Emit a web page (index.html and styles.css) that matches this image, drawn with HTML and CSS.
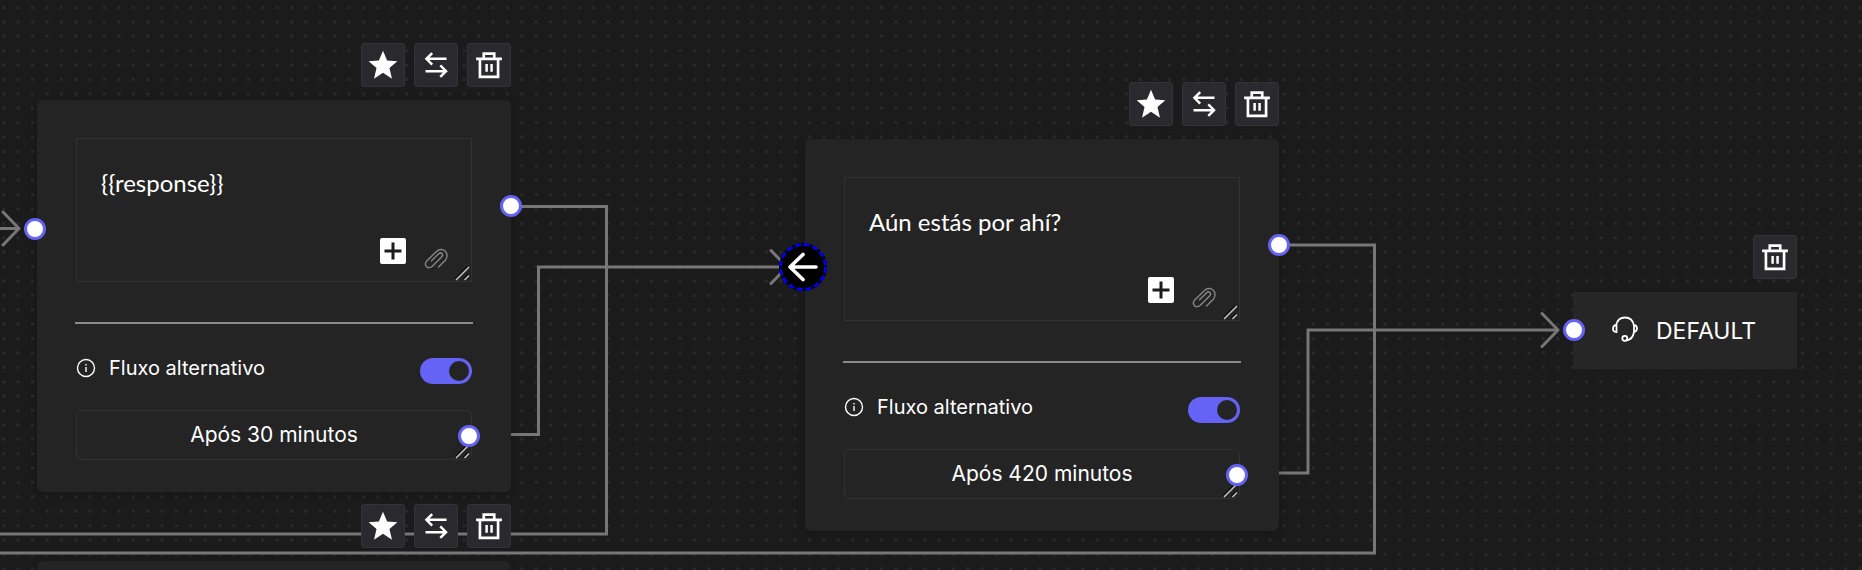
FILE: index.html
```html
<!DOCTYPE html>
<html lang="pt-BR">
<head>
<meta charset="utf-8">
<title>Editor de fluxo</title>
<link rel="stylesheet" href="styles.css">
</head>
<body>
<svg class="symbols" aria-hidden="true">
  <symbol id="star" viewBox="0 0 44 44"><path fill="currentColor" d="M22 7l4.300 10.200 10.700.8-8.200 7.100 2.600 11.400L22 30.200l-9.400 6.300 2.600-11.400L7 18l10.700-.8z"/></symbol>
  <symbol id="swap" viewBox="0 0 44 44"><path fill="none" stroke="currentColor" stroke-width="2.600" d="M33 15.500H12M18 9.500l-6 6 6 6M11 28.500h21.500M26.500 22.500l6 6-6 6"/></symbol>
  <symbol id="trash" viewBox="0 0 44 44"><path fill="none" stroke="currentColor" stroke-width="2.800" d="M8.500 15.500h27M12.500 15.500v19h19v-19M16.500 15v-5h11v5"/><path fill="none" stroke="currentColor" stroke-width="2.600" d="M19.500 21v8M24.700 21v8"/></symbol>
  <symbol id="plus" viewBox="0 0 26 26"><rect width="26" height="26" rx="2" fill="#fff"/><path stroke="#1b1b1b" stroke-width="3" d="M13 4.500v17M4.500 13h17"/></symbol>
  <symbol id="clip" viewBox="0 0 24 22"><path fill="none" stroke="currentColor" stroke-width="1.400" stroke-linecap="round" d="M14.500 20l6.800-6.800c2.300-2.500 2.200-7-.2-9.200-2.300-2.200-6-2-8.600.4l-9.300 9.100c-2 2-2.200 4.600-.7 6.200 1.500 1.500 4.100 1.300 6.100-.7l8.900-8.900c1.100-1.100 1.400-2.700.5-3.600-.9-.9-2.500-.6-3.600.5L7.500 13.800"/></symbol>
  <symbol id="info" viewBox="0 0 20 20"><circle cx="10" cy="10" r="8.500" fill="none" stroke="currentColor" stroke-width="1.400"/><path stroke="currentColor" stroke-width="1.400" d="M10 9v5M10 6v1.500"/></symbol>
  <symbol id="grip" viewBox="0 0 15 15"><path stroke="#0c0c0c" stroke-width="1.500" d="M0 13L12.500.5M8.500 13L13 8.500"/><path stroke="#c4c4c4" stroke-width="1.500" d="M1 14L14 1M9.500 14L14 9.500"/></symbol>
</svg>

<main class="canvas">
  <svg class="edges" width="100%" height="100%" aria-hidden="true">
    <defs>
      <pattern id="dots" x="2.200" y="-8.300" width="14.390" height="14.390" patternUnits="userSpaceOnUse"><rect width="3" height="3" fill="#292929"/></pattern>
    </defs>
    <rect width="100%" height="100%" fill="url(#dots)"/>
    <g class="wires">
      <path d="M0 228.500h20"/>
      <path d="M511 206.500h95.500V534H0"/>
      <path d="M511 434.500h27.500V267H787"/>
      <path d="M1279 245h95.500v308H0"/>
      <path d="M1279 473h29V330h250"/>
      <path class="tip" d="M3 212l16 16.500L3 245M771 250.500l16 16.500-16 16.500M1542 313.500l16 16.500-16 16.500"/>
    </g>
  </svg>

  <section class="node node-a">
    <div class="tools">
      <button class="tool" aria-label="Favorito"><svg><use href="#star"/></svg></button>
      <button class="tool" aria-label="Trocar"><svg><use href="#swap"/></svg></button>
      <button class="tool" aria-label="Excluir"><svg><use href="#trash"/></svg></button>
    </div>
    <div class="card">
      <div class="message">
        <textarea class="message-text" aria-label="Mensagem">{{response}}</textarea>
        <div class="message-actions">
          <button class="plain" aria-label="Adicionar variável"><svg class="icon-plus"><use href="#plus"/></svg></button>
          <button class="plain" aria-label="Anexar"><svg class="icon-clip"><use href="#clip"/></svg></button>
        </div>
        <svg class="grip" aria-hidden="true"><use href="#grip"/></svg>
      </div>
      <hr class="rule">
      <div class="option">
        <label class="option-label" for="alt-a"><svg class="icon-info"><use href="#info"/></svg>Fluxo alternativo</label>
        <input class="switch" id="alt-a" type="checkbox" role="switch" checked>
      </div>
      <div class="delay">
        <textarea class="delay-text" aria-label="Tempo de espera">Após 30 minutos</textarea>
        <svg class="grip" aria-hidden="true"><use href="#grip"/></svg>
        <span class="port port-delay"></span>
      </div>
      <span class="port port-in"></span>
      <span class="port port-out"></span>
    </div>
  </section>

  <section class="node node-b">
    <div class="tools">
      <button class="tool" aria-label="Favorito"><svg><use href="#star"/></svg></button>
      <button class="tool" aria-label="Trocar"><svg><use href="#swap"/></svg></button>
      <button class="tool" aria-label="Excluir"><svg><use href="#trash"/></svg></button>
    </div>
    <div class="card">
      <div class="message">
        <textarea class="message-text" aria-label="Mensagem">Aún estás por ahí?</textarea>
        <div class="message-actions">
          <button class="plain" aria-label="Adicionar variável"><svg class="icon-plus"><use href="#plus"/></svg></button>
          <button class="plain" aria-label="Anexar"><svg class="icon-clip"><use href="#clip"/></svg></button>
        </div>
        <svg class="grip" aria-hidden="true"><use href="#grip"/></svg>
      </div>
      <hr class="rule">
      <div class="option">
        <label class="option-label" for="alt-b"><svg class="icon-info"><use href="#info"/></svg>Fluxo alternativo</label>
        <input class="switch" id="alt-b" type="checkbox" role="switch" checked>
      </div>
      <div class="delay">
        <textarea class="delay-text" aria-label="Tempo de espera">Após 420 minutos</textarea>
        <svg class="grip" aria-hidden="true"><use href="#grip"/></svg>
        <span class="port port-delay"></span>
      </div>
      <button class="back" aria-label="Voltar"><svg viewBox="0 0 48 48"><circle cx="24" cy="24" r="24" fill="#000"/><circle cx="24" cy="24" r="22.500" fill="none" stroke="#0000f5" stroke-width="2.800" stroke-dasharray="6 2.836"/><path fill="none" stroke="#fff" stroke-width="3.600" stroke-linecap="round" stroke-linejoin="round" d="M37 24H11M24 11.500L11 24l13 12.500"/></svg></button>
      <span class="port port-out"></span>
    </div>
  </section>

  <section class="node node-c">
    <div class="tools">
      <button class="tool" aria-label="Favorito"><svg><use href="#star"/></svg></button>
      <button class="tool" aria-label="Trocar"><svg><use href="#swap"/></svg></button>
      <button class="tool" aria-label="Excluir"><svg><use href="#trash"/></svg></button>
    </div>
    <div class="card"></div>
  </section>

  <section class="node node-d">
    <div class="tools">
      <button class="tool" aria-label="Excluir"><svg><use href="#trash"/></svg></button>
    </div>
    <div class="queue">
      <svg class="icon-agent" viewBox="0 0 26 26" fill="none" stroke="#fff" stroke-width="1.800" aria-hidden="true"><path d="M4 9.500C5 4.500 8.500 1.500 13 1.500s8 3 9 8M4.500 9C2.500 9 1 10.500 1 12.500S2.500 16 4.500 16zM22 9c1.800.3 3 1.700 3 3.500s-1.200 3-3 3.500M22 9v7c-.7 4.500-3.500 8-8 8.500"/><circle cx="12.800" cy="22.300" r="2.500"/></svg>
      <span>DEFAULT</span>
      <span class="port port-queue"></span>
    </div>
  </section>
</main>
</body>
</html>
```

FILE: styles.css
```css
* {
  box-sizing: border-box;
}

body {
  margin: 0;
  color-scheme: dark;
  background: #1b1b1b;
  color: #fff;
  font-family: "Inter", "Liberation Sans", sans-serif;
}

button,
textarea {
  font-family: inherit;
  color: inherit;
}

.symbols {
  position: absolute;
  width: 0;
  height: 0;
}

.canvas {
  position: relative;
  height: 100vh;
  overflow: hidden;
}

.edges {
  position: absolute;
  inset: 0;
}

.wires path {
  fill: none;
  stroke: #777;
  stroke-width: 3px;
}

.wires .tip {
  stroke-linecap: round;
  stroke-linejoin: round;
}

/* Nodes on the free canvas */
.node {
  position: absolute;
  display: flex;
  flex-direction: column;
  gap: 13px;
  width: 474px;
}

.node-a {
  left: 37px;
  top: 43px;
}

.node-b {
  left: 805px;
  top: 82px;
}

.node-c {
  left: 37px;
  top: 504px;
}

.node-d {
  left: 1573px;
  top: 235px;
  width: 224px;
}

.tools {
  display: flex;
  justify-content: flex-end;
  gap: 9px;
}

.tool {
  display: flex;
  width: 44px;
  height: 44px;
  padding: 0;
  border: 1px solid #333338;
  border-radius: 3px;
  background: #2a292e;
}

.tool svg {
  width: 100%;
  height: 100%;
}

.card {
  position: relative;
  padding: 38px 39px 32px;
  border-radius: 6px;
  background: #242424;
  box-shadow: 0 3px 10px rgba(0, 0, 0, 0.2);
}

.message,
.delay {
  position: relative;
  display: flex;
}

.message-text,
.delay-text {
  width: 100%;
  border: 1px solid #323232;
  background: transparent;
  outline: none;
  overflow: hidden;
  resize: none;
}

.message-text {
  height: 144px;
  padding: 29px 24px;
  font-family: "Lato", "Inter", sans-serif;
  font-size: 24px;
  line-height: 30px;
}

.message-actions {
  position: absolute;
  right: 24px;
  bottom: 13px;
  display: flex;
  align-items: flex-end;
  gap: 18px;
}

.grip {
  position: absolute;
  right: 2px;
  bottom: 1px;
  width: 15px;
  height: 15px;
  pointer-events: none;
}

.plain {
  display: flex;
  padding: 0;
  border: 0;
  background: none;
}

.icon-plus {
  width: 26px;
  height: 26px;
  margin-bottom: 5px;
}

.icon-clip {
  width: 24px;
  height: 22px;
  color: #858585;
}

.rule {
  height: 2px;
  margin: 40px -1px 32px;
  border: 0;
  background: #8a8a8a;
}

.option {
  display: flex;
  align-items: center;
  justify-content: space-between;
  margin-bottom: 24px;
}

.option-label {
  display: flex;
  align-items: center;
  gap: 13px;
  padding-bottom: 6px;
  font-size: 20px;
  line-height: 24px;
}

.icon-info {
  width: 20px;
  height: 20px;
}

.switch {
  appearance: none;
  display: flex;
  justify-content: flex-end;
  width: 52px;
  height: 26px;
  margin: 0;
  padding: 3px;
  border-radius: 13px;
  background: #6563f5;
}

.switch::before {
  content: "";
  width: 20px;
  height: 20px;
  border-radius: 50%;
  background: #242424;
}

.delay-text {
  height: 50px;
  padding: 10px;
  border-radius: 6px;
  font-size: 21px;
  line-height: 28px;
  text-align: center;
}

.queue {
  position: relative;
  display: flex;
  align-items: center;
  gap: 18px;
  height: 77px;
  padding: 0 39px;
  background: #262626;
  font-size: 23px;
}

.icon-agent {
  flex-shrink: 0;
  width: 26px;
  height: 26px;
  margin-bottom: 4px;
}

/* Connection ports sit over the node borders */
.port {
  position: absolute;
  width: 22px;
  height: 22px;
  border: 3px solid #6563f5;
  border-radius: 50%;
  background: #fff;
}

.port-in {
  left: -13px;
  top: 118px;
}

.port-out {
  right: -11px;
  top: 95px;
}

.port-delay {
  right: -8px;
  top: 15px;
}

.port-queue {
  left: -10px;
  top: 27px;
}

.back {
  position: absolute;
  left: -26px;
  top: 104px;
  width: 48px;
  height: 48px;
  padding: 0;
  border: 0;
  background: none;
}
```
